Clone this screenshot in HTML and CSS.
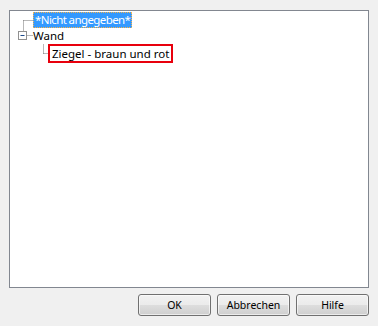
FILE: index.html
```html
<!DOCTYPE html>
<html lang="de">
  <head>
    <meta charset="UTF-8" />
    <meta name="viewport" content="width=device-width, initial-scale=1.0" />
    <title>Auswahl</title>
    <link rel="stylesheet" href="styles.css">
  </head>
  <body>
    <div class="dialog">
      <div class="tree">
        <div class="row">
          <svg class="lines" width="23" height="16" viewBox="0 0 23 16">
            <path d="M13 8h10M13 8v8" class="dots" />
          </svg>
          <span class="label selected">*Nicht angegeben*</span>
        </div>
        <div class="row">
          <svg class="lines" width="23" height="16" viewBox="0 0 23 16">
            <path d="M13 0v3M17 7h6" class="dots" />
            <rect x="8.5" y="3.5" width="8" height="8" class="box" />
            <path d="M10.5 7.5h4" class="minus" />
          </svg>
          <span class="label">Wand</span>
        </div>
        <div class="row child">
          <svg class="lines" width="38" height="19" viewBox="0 0 38 19">
            <path d="M33 0v9M33 9h5" class="dots" />
          </svg>
          <span class="label editing">Ziegel - braun und rot</span>
        </div>
      </div>
      <div class="buttons">
        <button type="button">OK</button>
        <button type="button">Abbrechen</button>
        <button type="button">Hilfe</button>
      </div>
    </div>
  </body>
</html>
```

FILE: styles.css
```css
body {
  margin: 0;
  padding: 10px 9px;
  background-color: #f0f0f0;
  font-family: "Noto Sans", sans-serif;
  font-size: 11.5px;
  color: #000;
}
.dialog {
  width: 360px;
}
.tree {
  box-sizing: border-box;
  height: 278px;
  border: 1px solid #828790;
  background-color: #fff;
  padding-top: 1px;
}
.row {
  display: flex;
  align-items: center;
  height: 16px;
}
.row.child {
  height: 19px;
}
.lines {
  flex: none;
  display: block;
}
.dots {
  fill: none;
  stroke: #707070;
  stroke-width: 1;
  stroke-dasharray: 1 1;
  transform: translate(0.5px, 0.5px);
}
.box {
  fill: #fff;
  stroke: #919191;
}
.minus {
  stroke: #1c4b8c;
  stroke-width: 1;
}
.label {
  white-space: nowrap;
  line-height: 14px;
}
.label.selected {
  background-color: #3399ff;
  color: #fff;
  padding: 0 1px;
  letter-spacing: -0.6px;
  border: 1px dotted #000;
  outline: 1px dotted #f7b24a;
  outline-offset: -1px;
}
.label.editing {
  box-sizing: border-box;
  height: 19px;
  line-height: 15px;
  padding: 0 2px;
  border: 2px solid #e8000d;
}
.buttons {
  display: flex;
  justify-content: flex-end;
  gap: 6px;
  margin-top: 6px;
}
button {
  width: 73px;
  height: 22px;
  padding: 0;
  font-family: "Noto Sans", sans-serif;
  font-size: 10.5px;
  color: #000;
  border: 1px solid #707070;
  border-radius: 3px;
  background: linear-gradient(#f2f2f2 0%, #ebebeb 50%, #dddddd 51%, #cfcfcf 100%);
  box-shadow: inset 0 0 0 1px rgba(255, 255, 255, 0.6);
  cursor: pointer;
}
```
